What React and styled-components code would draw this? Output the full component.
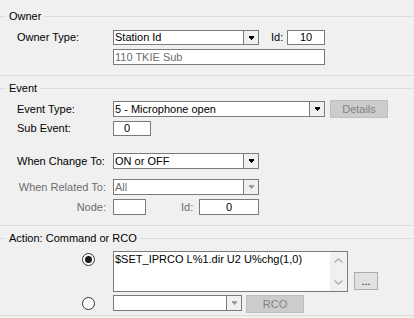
import React from "react";
import styled, { createGlobalStyle } from "styled-components";

const Global = createGlobalStyle`
  * { box-sizing: border-box; }
  html, body { margin: 0; padding: 0; background: #f0f0f0; }
  body {
    font-family: "Liberation Sans", Arial, sans-serif;
    font-size: 11px;
    color: #000;
  }
`;

const Page = styled.div`
  width: 414px;
  height: 318px;
  overflow: hidden;
  background: #f0f0f0;
`;

const Group = styled.section`
  padding-top: ${(p) => p.$pt}px;
  padding-bottom: ${(p) => p.$pb}px;
  border-bottom: 1px solid #dcdcdc;
`;

const Legend = styled.div`
  display: flex;
  align-items: center;
  gap: 3px;
  height: 13px;
  line-height: 13px;
  &::before {
    content: "";
    width: 6px;
    height: 1px;
    background: #dcdcdc;
  }
  &::after {
    content: "";
    flex: 1;
    height: 1px;
    background: #dcdcdc;
  }
`;

const Row = styled.div`
  display: flex;
  align-items: ${(p) => p.$align || "center"};
  height: ${(p) => p.$h}px;
  margin-top: ${(p) => p.$mt}px;
  padding-left: 17px;
`;

const Label = styled.div`
  width: 96px;
  flex: none;
  line-height: 13px;
  white-space: nowrap;
  text-align: ${(p) => (p.$right ? "right" : "left")};
  padding-right: ${(p) => (p.$right ? 7 : 0)}px;
  color: ${(p) => (p.$disabled ? "#6d6d6d" : "#000")};
`;

const SmallLabel = styled.div`
  width: ${(p) => p.$w}px;
  flex: none;
  padding-left: ${(p) => p.$pl}px;
  line-height: 13px;
  color: ${(p) => (p.$disabled ? "#6d6d6d" : "#000")};
`;

const Combo = styled.div`
  display: flex;
  width: ${(p) => p.$w}px;
  height: ${(p) => p.$h}px;
  border: 1px solid #7a7a7a;
  background: #fff;
  flex: none;
`;

const ComboText = styled.div`
  flex: 1;
  padding-left: 1px;
  line-height: ${(p) => p.$h - 2}px;
  color: ${(p) => (p.$disabled ? "#6d6d6d" : "#000")};
  white-space: nowrap;
  overflow: hidden;
`;

const ComboBtn = styled.div`
  width: 15px;
  flex: none;
  border-left: 1px solid #7a7a7a;
  background: #f0f0f0;
  display: flex;
  align-items: center;
  justify-content: center;
`;

const TextBox = styled.div`
  width: ${(p) => p.$w}px;
  height: ${(p) => p.$h}px;
  flex: none;
  border: 1px solid #7a7a7a;
  background: #fff;
  line-height: ${(p) => p.$h - 2}px;
  padding-left: ${(p) => p.$pl ?? 1}px;
  text-align: ${(p) => p.$align || "left"};
  color: ${(p) => (p.$muted ? "#6d6d6d" : "#000")};
  white-space: nowrap;
`;

const Button = styled.div`
  width: ${(p) => p.$w}px;
  height: ${(p) => p.$h}px;
  flex: none;
  margin-left: ${(p) => p.$ml}px;
  border: 1px solid ${(p) => (p.$disabled ? "#bfbfbf" : "#adadad")};
  background: ${(p) => (p.$disabled ? "#cccccc" : "#e1e1e1")};
  color: ${(p) => (p.$disabled ? "#838383" : "#000")};
  display: flex;
  align-items: center;
  justify-content: center;
  line-height: 13px;
  align-self: ${(p) => p.$self || "auto"};
  margin-bottom: ${(p) => p.$mb || 0}px;
`;

const RadioCell = styled.div`
  width: 96px;
  flex: none;
  display: flex;
  justify-content: flex-end;
  padding-right: 18px;
  padding-top: 2px;
`;

const Radio = styled.div`
  width: 13px;
  height: 13px;
  border-radius: 50%;
  border: 1px solid #333;
  background: #fff;
  display: flex;
  align-items: center;
  justify-content: center;
  &::after {
    content: "";
    width: 7px;
    height: 7px;
    border-radius: 50%;
    background: ${(p) => (p.$checked ? "#1a1a1a" : "transparent")};
  }
`;

const Memo = styled.div`
  width: 235px;
  height: 41px;
  flex: none;
  border: 1px solid #7a7a7a;
  background: #fff;
  display: flex;
`;

const MemoText = styled.div`
  flex: 1;
  padding: 1px 0 0 1px;
  line-height: 13px;
  white-space: nowrap;
  overflow: hidden;
`;

const ScrollBar = styled.div`
  width: 17px;
  flex: none;
  background: #f0f0f0;
  display: flex;
  flex-direction: column;
  justify-content: space-between;
`;

const ScrollArrow = styled.div`
  height: 17px;
  display: flex;
  align-items: center;
  justify-content: center;
`;

const Arrow = ({ disabled }) => (
  <svg width="5" height="4" viewBox="0 0 5 4" shapeRendering="crispEdges">
    <g fill={disabled ? "#a0a0a0" : "#000"}>
      <rect x="0" y="0" width="5" height="2" />
      <rect x="1" y="2" width="3" height="1" />
      <rect x="2" y="3" width="1" height="1" />
    </g>
  </svg>
);

const Chevron = ({ up }) => (
  <svg width="9" height="5" viewBox="0 0 9 5">
    <path
      d={up ? "M0.5 4.5 L4.5 0.8 L8.5 4.5" : "M0.5 0.5 L4.5 4.2 L8.5 0.5"}
      fill="none"
      stroke="#a6a6a6"
      strokeWidth="1.2"
    />
  </svg>
);

const ComboBox = ({ w, h, text, disabled }) => (
  <Combo $w={w} $h={h}>
    <ComboText $h={h} $disabled={disabled}>
      {text}
    </ComboText>
    <ComboBtn>
      <Arrow disabled={disabled} />
    </ComboBtn>
  </Combo>
);

export default function App() {
  return (
    <Page>
      <Global />
      <Group $pt={10} $pb={10}>
        <Legend>Owner</Legend>
        <Row $mt={7} $h={15}>
          <Label>Owner Type:</Label>
          <ComboBox w={146} h={15} text="Station Id" />
          <SmallLabel $w={28} $pl={12}>Id:</SmallLabel>
          <TextBox $w={38} $h={15} $align="center" $pl={0}>10</TextBox>
        </Row>
        <Row $mt={4} $h={16}>
          <Label />
          <TextBox $w={212} $h={16} $muted>110 TKIE Sub</TextBox>
        </Row>
      </Group>

      <Group $pt={6} $pb={10}>
        <Legend>Event</Legend>
        <Row $mt={5} $h={18}>
          <Label>Event Type:</Label>
          <ComboBox w={212} h={16} text="5 - Microphone open" />
          <Button $w={58} $h={18} $ml={5} $disabled>Details</Button>
        </Row>
        <Row $mt={3} $h={15}>
          <Label>Sub Event:</Label>
          <TextBox $w={38} $h={15} $pl={10}>0</TextBox>
        </Row>
        <Row $mt={17} $h={16}>
          <Label>When Change To:</Label>
          <ComboBox w={146} h={16} text="ON or OFF" />
        </Row>
        <Row $mt={10} $h={16}>
          <Label $right $disabled>When Related To:</Label>
          <ComboBox w={146} h={16} text="All" disabled />
        </Row>
        <Row $mt={4} $h={16}>
          <Label $right $disabled>Node:</Label>
          <TextBox $w={33} $h={16} />
          <SmallLabel $w={53} $pl={35} $disabled>Id:</SmallLabel>
          <TextBox $w={60} $h={16} $align="center" $pl={0}>0</TextBox>
        </Row>
      </Group>

      <Group $pt={6} $pb={2}>
        <Legend>Action: Command or RCO</Legend>
        <Row $mt={6} $h={41} $align="flex-start">
          <RadioCell>
            <Radio $checked />
          </RadioCell>
          <Memo>
            <MemoText>$SET_IPRCO L%1.dir U2 U%chg(1,0)</MemoText>
            <ScrollBar>
              <ScrollArrow>
                <Chevron up />
              </ScrollArrow>
              <ScrollArrow>
                <Chevron />
              </ScrollArrow>
            </ScrollBar>
          </Memo>
          <Button $w={24} $h={18} $ml={6} $self="flex-end" $mb={2}>...</Button>
        </Row>
        <Row $mt={3} $h={18} $align="flex-start">
          <RadioCell>
            <Radio />
          </RadioCell>
          <ComboBox w={129} h={16} text="" disabled />
          <Button $w={58} $h={18} $ml={4} $disabled>RCO</Button>
        </Row>
      </Group>
    </Page>
  );
}
